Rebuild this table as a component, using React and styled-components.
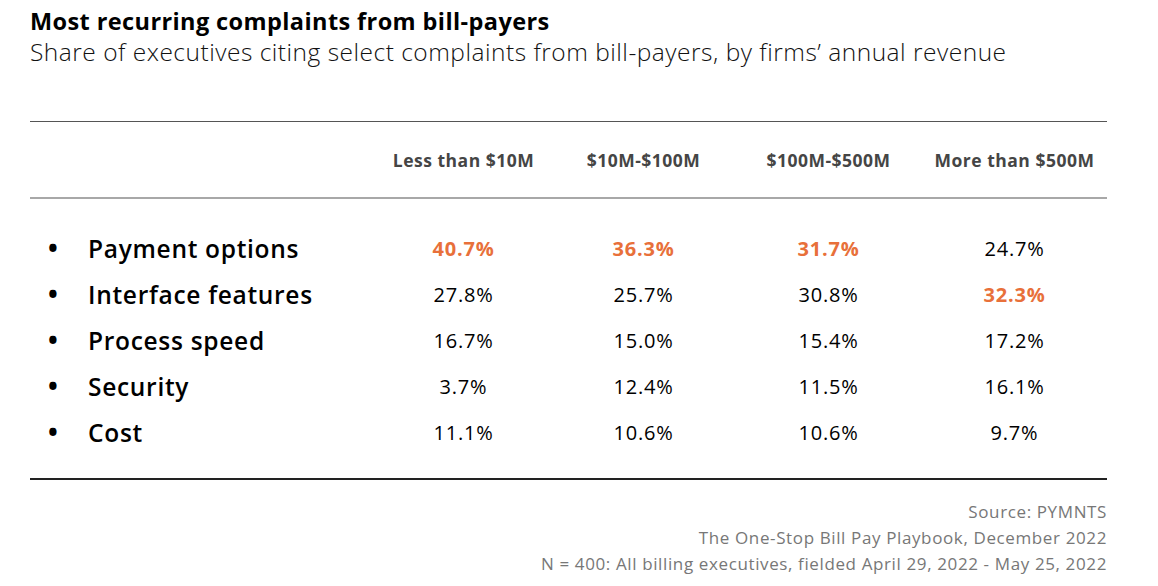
import React from "react"
import styled, { createGlobalStyle } from "styled-components"

const GlobalStyle = createGlobalStyle`
  body {
    margin: 0;
    background: #ffffff;
    font-family: "Open Sans", "Liberation Sans", Arial, sans-serif;
  }
`

const Page = styled.div`
  width: 1158px;
  height: 586px;
  padding: 6px 51px 0 30px;
  box-sizing: border-box;
`

const Title = styled.h1`
  margin: 0;
  font-size: 23.5px;
  line-height: 30px;
  font-weight: 700;
  color: #000;
  letter-spacing: 0.4px;
`

const Subtitle = styled.p`
  margin: 0;
  font-size: 24.5px;
  line-height: 32px;
  font-weight: 300;
  color: #111;
  letter-spacing: 0.5px;
`

const Table = styled.div`
  margin-top: 53px;
  display: grid;
  grid-template-columns: 345px 177px 183px 187px 1fr;
`

const HeadRow = styled.div`
  grid-column: 1 / -1;
  display: grid;
  grid-template-columns: subgrid;
  align-items: center;
  height: 75px;
  border-top: 1px solid #555;
  border-bottom: 2px solid #a8a8a8;
`

const HeadCell = styled.div`
  text-align: center;
  font-size: 17.5px;
  font-weight: 700;
  color: #454545;
  letter-spacing: 0.5px;
  white-space: nowrap;
`

const Body = styled.div`
  grid-column: 1 / -1;
  display: grid;
  grid-template-columns: subgrid;
  padding: 26px 0 23px;
  border-bottom: 2px solid #222;
`

const Row = styled.div`
  grid-column: 1 / -1;
  display: grid;
  grid-template-columns: subgrid;
  align-items: center;
  height: 46px;
`

const Label = styled.div`
  display: flex;
  align-items: center;
  font-size: 24.5px;
  font-weight: 600;
  color: #000;
  letter-spacing: 0.7px;
`

const Bullet = styled.span`
  width: 58px;
  padding-left: 18px;
  box-sizing: border-box;
  font-size: 26px;
  font-weight: 700;
`

const Value = styled.div`
  text-align: center;
  font-size: 20px;
  font-weight: ${p => (p.$hi ? 700 : 400)};
  color: ${p => (p.$hi ? "#e8703a" : "#000")};
  letter-spacing: 0.8px;
`

const Notes = styled.div`
  padding-top: 19px;
  text-align: right;
  font-size: 17px;
  line-height: 26px;
  color: #777;
  letter-spacing: 0.62px;
`

const columns = ["Less than $10M", "$10M-$100M", "$100M-$500M", "More than $500M"]

const rows = [
  { name: "Payment options", values: ["40.7%", "36.3%", "31.7%", "24.7%"], hi: [0, 1, 2] },
  { name: "Interface features", values: ["27.8%", "25.7%", "30.8%", "32.3%"], hi: [3] },
  { name: "Process speed", values: ["16.7%", "15.0%", "15.4%", "17.2%"], hi: [] },
  { name: "Security", values: ["3.7%", "12.4%", "11.5%", "16.1%"], hi: [] },
  { name: "Cost", values: ["11.1%", "10.6%", "10.6%", "9.7%"], hi: [] },
]

const App = () => (
  <Page>
    <GlobalStyle />
    <Title>Most recurring complaints from bill-payers</Title>
    <Subtitle>Share of executives citing select complaints from bill-payers, by firms’ annual revenue</Subtitle>
    <Table>
      <HeadRow>
        <div />
        {columns.map(c => (
          <HeadCell key={c}>{c}</HeadCell>
        ))}
      </HeadRow>
      <Body>
        {rows.map(r => (
          <Row key={r.name}>
            <Label>
              <Bullet>•</Bullet>
              {r.name}
            </Label>
            {r.values.map((v, i) => (
              <Value key={i} $hi={r.hi.includes(i)}>
                {v}
              </Value>
            ))}
          </Row>
        ))}
      </Body>
    </Table>
    <Notes>
      <div>Source: PYMNTS</div>
      <div>The One-Stop Bill Pay Playbook, December 2022</div>
      <div>N = 400: All billing executives, fielded April 29, 2022 - May 25, 2022</div>
    </Notes>
  </Page>
)

export default App
